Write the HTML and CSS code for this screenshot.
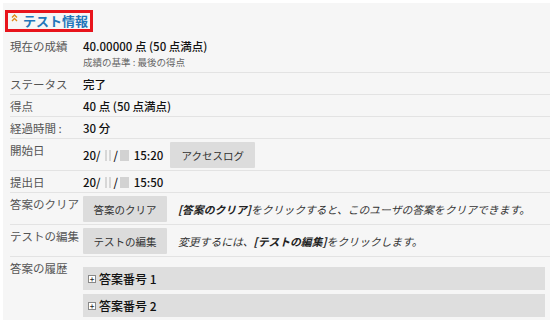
FILE: index.html
```html
<!DOCTYPE html>
<html lang="ja">
<head>
    <meta charset="UTF-8">
    <meta name="viewport" content="width=device-width, initial-scale=1.0">
    <title>テスト情報</title>
    <link rel="stylesheet" href="styles.css">
</head>
<body>
    <div class="panel">
        <div class="header">
            <h2 class="title">
                <svg class="collapse-icon" width="7" height="8" viewBox="0 0 7 8">
                    <polyline points="1,3.5 3.5,1 6,3.5" fill="none" stroke="#e08a1a" stroke-width="1.4"/>
                    <polyline points="1,7 3.5,4.5 6,7" fill="none" stroke="#e08a1a" stroke-width="1.4"/>
                </svg>
                テスト情報
            </h2>
        </div>

        <div class="row">
            <div class="label">現在の成績</div>
            <div class="value">
                <div>40.00000 点 (50 点満点)</div>
                <div class="note">成績の基準 : 最後の得点</div>
            </div>
        </div>
        <div class="row">
            <div class="label">ステータス</div>
            <div class="value">完了</div>
        </div>
        <div class="row">
            <div class="label">得点</div>
            <div class="value">40 点 (50 点満点)</div>
        </div>
        <div class="row">
            <div class="label">経過時間 :</div>
            <div class="value">30 分</div>
        </div>
        <div class="row">
            <div class="label">開始日</div>
            <div class="value inline">
                <span class="date">20/<span class="blur thin"></span>/<span class="blur"></span> 15:20</span>
                <button class="btn btn-log">アクセスログ</button>
            </div>
        </div>
        <div class="row">
            <div class="label">提出日</div>
            <div class="value">
                <span class="date">20/<span class="blur thin"></span>/<span class="blur"></span> 15:50</span>
            </div>
        </div>
        <div class="row">
            <div class="label">答案のクリア</div>
            <div class="value inline">
                <button class="btn">答案のクリア</button>
                <span class="hint"><b>[答案のクリア]</b>をクリックすると、このユーザの答案をクリアできます。</span>
            </div>
        </div>
        <div class="row">
            <div class="label">テストの編集</div>
            <div class="value inline">
                <button class="btn">テストの編集</button>
                <span class="hint">変更するには、<b>[テストの編集]</b>をクリックします。</span>
            </div>
        </div>
        <div class="row last">
            <div class="label">答案の履歴</div>
            <div class="value history">
                <div class="attempt"><span class="plus">+</span>答案番号 1</div>
                <div class="attempt"><span class="plus">+</span>答案番号 2</div>
            </div>
        </div>
    </div>
</body>
</html>
```

FILE: styles.css
```css
body {
    margin: 0;
    padding: 3px 0 0 3px;
    background-color: #fff;
    font-family: "Noto Sans CJK JP", "Noto Sans", sans-serif;
    font-size: 11.5px;
    line-height: 16px;
    color: #222;
}
.panel {
    background-color: #f6f6f6;
    height: 317px;
    overflow: hidden;
}
.header {
    padding: 6px 0 0 2px;
    margin-bottom: 3px;
}
.title {
    display: inline-flex;
    align-items: center;
    box-sizing: border-box;
    height: 22px;
    margin: 0;
    padding: 0 2px 0 3px;
    border: 3px solid #e8141c;
    color: #2277bb;
    font-size: 13px;
    font-weight: bold;
    white-space: nowrap;
}
.collapse-icon {
    margin: 0 5px 6px 0;
}
.row {
    display: flex;
    align-items: flex-start;
    margin-left: 7px;
    padding: 3px 0 2px;
    border-bottom: 1px solid #e3e3e3;
}
.row.last {
    border-bottom: none;
}
.label {
    width: 73px;
    flex-shrink: 0;
    color: #555;
    white-space: nowrap;
}
.value {
    flex: 1;
    font-weight: 500;
    color: #111;
}
.value.inline {
    display: flex;
    align-items: center;
}
.note {
    font-size: 9.5px;
    font-weight: normal;
    color: #666;
}
.date {
    margin-right: 7px;
}
.blur {
    display: inline-block;
    width: 9px;
    height: 11px;
    margin: 0 2px;
    vertical-align: -1px;
    background-color: #c9c9c9;
    opacity: 0.8;
}
.blur.thin {
    background: linear-gradient(90deg, #f6f6f6 0 2px, #cfcfcf 2px 4px, #f6f6f6 4px 6px, #cfcfcf 6px 8px, #f6f6f6 8px);
}
.btn {
    height: 26px;
    width: 84px;
    border: none;
    border-radius: 1px;
    background-color: #dcdcdc;
    color: #333;
    font-family: inherit;
    font-size: 10.5px;
    padding: 0;
}
.btn-log {
    width: 85px;
}
.hint {
    margin-left: 11px;
    font-size: 10.8px;
    font-weight: normal;
    font-style: italic;
    color: #333;
    white-space: nowrap;
}
.hint b {
    color: #222;
}
.history {
    padding: 7px 5px 0 0;
    display: flex;
    flex-direction: column;
    gap: 4px;
}
.attempt {
    display: flex;
    align-items: center;
    height: 23px;
    padding-left: 5px;
    background-color: #dedede;
    font-size: 12px;
}
.plus {
    display: inline-flex;
    align-items: center;
    justify-content: center;
    box-sizing: border-box;
    width: 8px;
    height: 8px;
    margin-right: 3px;
    border: 1px solid #888;
    background-color: #fff;
    font-size: 8px;
    line-height: 8px;
    color: #222;
}
```
